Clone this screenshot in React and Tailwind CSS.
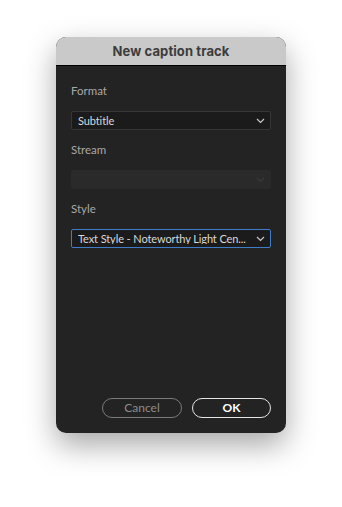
function Chevron({ className = '' }) {
  return (
    <svg width="9" height="6" viewBox="0 0 9 6" className={`shrink-0 ${className}`} fill="none">
      <path d="M1 1l3.5 3.5L8 1" stroke="currentColor" strokeWidth="1.2" />
    </svg>
  );
}

function Field({ label, value, variant = 'normal' }) {
  const box =
    variant === 'focus'
      ? 'border-[#3f7dc8] bg-[#1b1b1b]'
      : variant === 'disabled'
        ? 'border-[#2a2a2a] bg-[#2a2a2a]'
        : 'border-[#363636] bg-[#1b1b1b]';
  return (
    <div className="flex flex-col">
      <div className="text-[11.5px] leading-[14px] text-[#a8a8a8] h-[14px]">{label}</div>
      <div
        className={`mt-[13px] h-[19px] rounded-[2px] border flex items-center gap-[6px] pl-[6px] pr-[5px] ${box}`}
      >
        <span className="flex-1 min-w-0 overflow-hidden text-[11px] tracking-[-0.1px] leading-none text-[#d9d9d9] whitespace-nowrap">
          {value}
        </span>
        <Chevron className={variant === 'disabled' ? 'text-[#3a3a3a]' : 'text-[#c8c8c8]'} />
      </div>
    </div>
  );
}

export default function App() {
  return (
    <div
      className="w-[342px] h-[507px] bg-white pt-[37px] pl-[56px]"
      style={{ fontFamily: 'Lato, "Open Sans", sans-serif' }}
    >
      <div className="w-[230px] h-[396px] rounded-[10px] overflow-hidden flex flex-col shadow-[0_12px_30px_rgba(0,0,0,0.35)] bg-[#232323]">
        <div className="h-[29px] bg-[#c9c9c9] border-b border-black flex items-center justify-center pt-[2px]">
          <span
            className="text-[13px] font-bold text-[#3c3c3c] tracking-[0.1px]"
            style={{ fontFamily: 'Inter, "Liberation Sans", sans-serif' }}
          >
            New caption track
          </span>
        </div>
        <div className="flex-1 flex flex-col px-[15px] pt-[18px] pb-[15px]">
          <div className="flex flex-col gap-[13px]">
            <Field label="Format" value="Subtitle" />
            <Field label="Stream" value="" variant="disabled" />
            <Field label="Style" value="Text Style - Noteworthy Light Cen..." variant="focus" />
          </div>
          <div className="mt-auto flex justify-end gap-[10px]">
            <button className="w-[80px] h-[20px] rounded-full border border-[#7a7a7a] text-[12px] text-[#8c8c8c] leading-none">
              Cancel
            </button>
            <button className="w-[79px] h-[20px] rounded-full border-[1.5px] border-[#e6e6e6] text-[12px] font-bold text-white leading-none">
              OK
            </button>
          </div>
        </div>
      </div>
    </div>
  );
}
